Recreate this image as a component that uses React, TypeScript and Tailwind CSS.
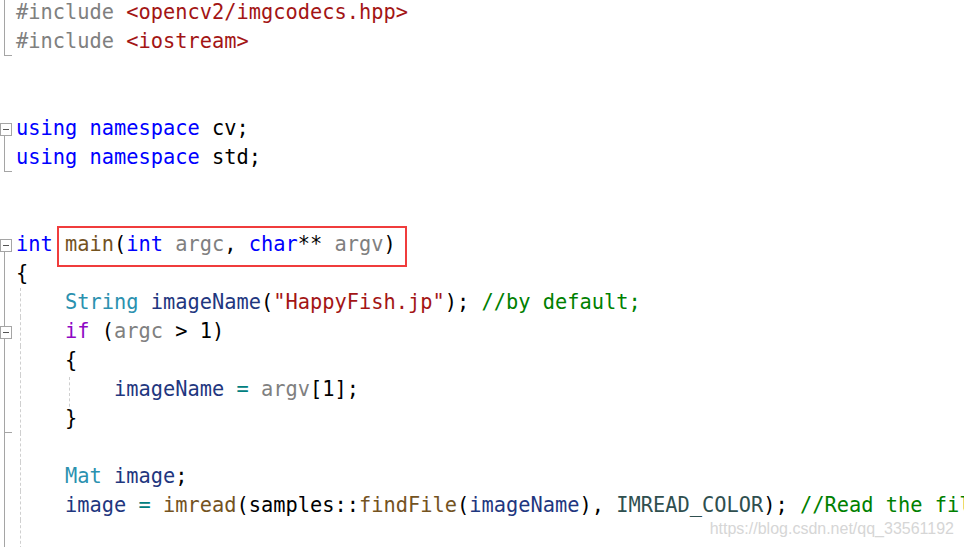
import React from "react";

// VS light theme token colours
const C = {
  pp: "text-[#808080]",
  inc: "text-[#a31515]",
  kw: "text-[#0000ff]",
  pl: "text-[#000000]",
  fn: "text-[#74531f]",
  par: "text-[#808080]",
  type: "text-[#2b91af]",
  loc: "text-[#1f377f]",
  ctrl: "text-[#8f08c4]",
  op: "text-[#008080]",
  str: "text-[#a31515]",
  cmt: "text-[#008000]",
  en: "text-[#2f4f4f]",
};

type Tok = [string, keyof typeof C];
type Gut = "none" | "line" | "end" | "open" | "openMid";

const LINES: { g: Gut; dash?: boolean; inner?: boolean; t: Tok[] }[] = [
  { g: "line", t: [["#include ", "pp"], ["<opencv2/imgcodecs.hpp>", "inc"]] },
  { g: "end", t: [["#include ", "pp"], ["<iostream>", "inc"]] },
  { g: "none", t: [] },
  { g: "none", t: [] },
  { g: "open", t: [["using namespace ", "kw"], ["cv;", "pl"]] },
  { g: "end", t: [["using namespace ", "kw"], ["std;", "pl"]] },
  { g: "none", t: [] },
  { g: "none", t: [] },
  {
    g: "open",
    t: [
      ["int", "kw"], [" ", "pl"], ["main", "fn"], ["(", "pl"], ["int", "kw"], [" ", "pl"],
      ["argc", "par"], [", ", "pl"], ["char", "kw"], ["** ", "pl"], ["argv", "par"], [")", "pl"],
    ],
  },
  { g: "line", t: [["{", "pl"]] },
  {
    g: "line",
    dash: true,
    t: [
      ["    ", "pl"], ["String", "type"], [" ", "pl"], ["imageName", "loc"], ["(", "pl"],
      ['"HappyFish.jp"', "str"], ["); ", "pl"], ["//by default;", "cmt"],
    ],
  },
  { g: "openMid", dash: true, t: [["    ", "pl"], ["if", "ctrl"], [" (", "pl"], ["argc", "par"], [" > 1)", "pl"]] },
  { g: "line", dash: true, t: [["    {", "pl"]] },
  {
    g: "line",
    dash: true,
    inner: true,
    t: [["        ", "pl"], ["imageName", "loc"], [" ", "pl"], ["=", "op"], [" ", "pl"], ["argv", "par"], ["[1];", "pl"]],
  },
  { g: "end", dash: true, t: [["    }", "pl"]] },
  { g: "line", dash: true, t: [] },
  { g: "line", dash: true, t: [["    ", "pl"], ["Mat", "type"], [" ", "pl"], ["image", "loc"], [";", "pl"]] },
  {
    g: "line",
    dash: true,
    t: [
      ["    ", "pl"], ["image", "loc"], [" ", "pl"], ["=", "op"], [" ", "pl"], ["imread", "fn"], ["(samples::", "pl"],
      ["findFile", "fn"], ["(", "pl"], ["imageName", "loc"], ["), ", "pl"], ["IMREAD_COLOR", "en"], ["); ", "pl"],
      ["//Read the file", "cmt"],
    ],
  },
  { g: "line", dash: true, t: [] },
];

function Gutter({ g }: { g: Gut }) {
  return (
    <div className="relative w-4 h-[29px] shrink-0">
      {(g === "line" || g === "end" || g === "openMid") && (
        <div className="absolute left-[4px] top-0 bottom-0 w-px bg-[#a5a5a5]" />
      )}
      {g === "end" && <div className="absolute left-[4px] bottom-0 w-[8px] h-px bg-[#a5a5a5]" />}
      {g === "open" && <div className="absolute left-[4px] top-[20px] bottom-0 w-px bg-[#a5a5a5]" />}
      {(g === "open" || g === "openMid") && (
        <div className="absolute left-0 top-[9px] w-[12px] h-[13px] border border-[#a5a5a5] bg-white flex items-center justify-center">
          <div className="w-[6px] h-px bg-[#555555]" />
        </div>
      )}
    </div>
  );
}

export default function App() {
  return (
    <div className="relative w-[964px] h-[547px] bg-white overflow-hidden">
      <div className="mt-[-2px] flex flex-col font-['DejaVu_Sans_Mono',monospace] text-[20.35px] leading-[29px]">
        {LINES.map((ln, i) => (
          <div key={i} className="flex h-[29px]">
            <Gutter g={ln.g} />
            <div className="relative flex-1 whitespace-pre">
              {ln.dash && <div className="absolute left-[4px] top-0 bottom-0 border-l border-dashed border-[#cfcfcf]" />}
              {ln.inner && <div className="absolute left-[53px] top-[2px] bottom-[-8px] border-l border-dashed border-[#cfcfcf]" />}
              {ln.t.map(([s, c], j) => (
                <span key={j} className={C[c]}>
                  {s}
                </span>
              ))}
            </div>
          </div>
        ))}
      </div>

      {/* highlight box */}
      <div className="absolute left-[57px] top-[226px] w-[350px] h-[41px] border-2 border-[#f03c3c]" />

      {/* watermark */}
      <div className="absolute right-[10px] top-[519px] font-['Liberation_Sans',Arial,sans-serif] text-[16px] leading-[20px] text-[#d6d6d6]">
        https://blog.csdn.net/qq_33561192
      </div>
    </div>
  );
}
